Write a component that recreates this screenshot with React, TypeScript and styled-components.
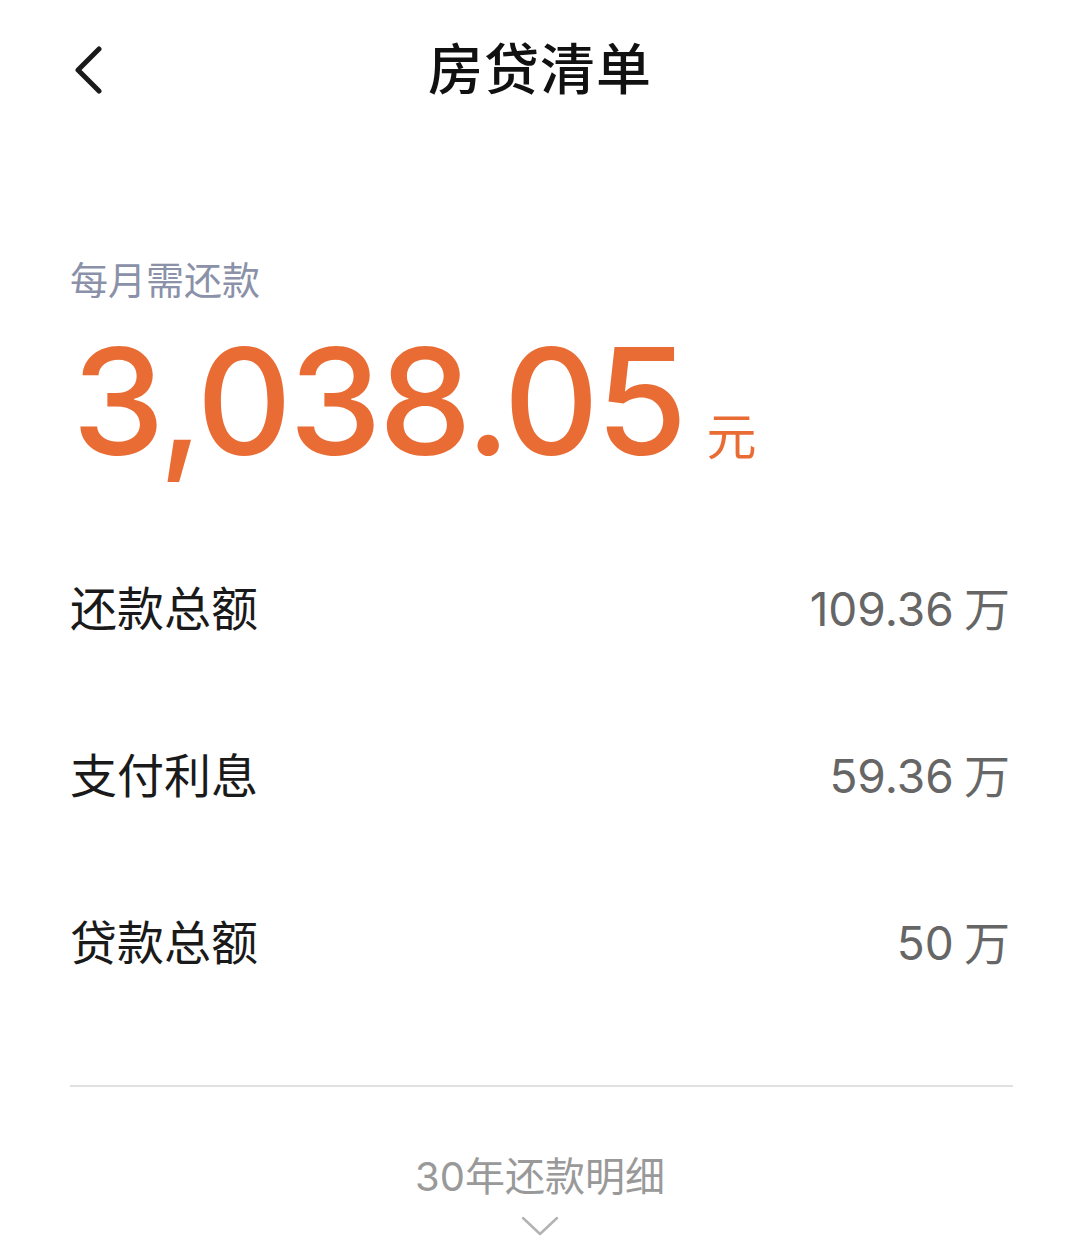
import React from "react";
import styled, { createGlobalStyle } from "styled-components";

const GlobalStyle = createGlobalStyle`
  html, body {
    margin: 0;
    padding: 0;
    background: #ffffff;
  }
  body {
    font-family: "Noto Sans CJK SC", "Noto Sans", sans-serif;
  }
`;

interface RowItem {
  label: string;
  value: string;
}

const rows: RowItem[] = [
  { label: "还款总额", value: "109.36" },
  { label: "支付利息", value: "59.36" },
  { label: "贷款总额", value: "50" },
];

const App = () => {
  return (
    <Page>
      <GlobalStyle />
      <Header>
        <BackButton aria-label="back">
          <svg width="32" height="48" viewBox="0 0 32 48" fill="none">
            <path
              d="M27 3 L6 24 L27 45"
              stroke="#1a1a1a"
              strokeWidth="5"
              strokeLinecap="round"
              strokeLinejoin="round"
            />
          </svg>
        </BackButton>
        <Title>房贷清单</Title>
        <span />
      </Header>

      <Summary>
        <SummaryLabel>每月需还款</SummaryLabel>
        <AmountLine>
          <Amount>3,038.05</Amount>
          <Unit>元</Unit>
        </AmountLine>
      </Summary>

      <List>
        {rows.map((row) => (
          <Row key={row.label}>
            <RowLabel>{row.label}</RowLabel>
            <RowValue>
              <Num>{row.value}</Num> 万
            </RowValue>
          </Row>
        ))}
      </List>

      <Divider />

      <Detail>
        <DetailText>
          <Num>30</Num>年还款明细
        </DetailText>
        <svg width="40" height="22" viewBox="0 0 40 22" fill="none">
          <path
            d="M3 3 L20 19 L37 3"
            stroke="#b3b3b3"
            strokeWidth="2.5"
            strokeLinecap="round"
            strokeLinejoin="round"
          />
        </svg>
      </Detail>
    </Page>
  );
};

const Page = styled.div`
  width: 1073px;
  height: 1253px;
  overflow: hidden;
  box-sizing: border-box;
  padding: 0 63px 0 70px;
`;

const Header = styled.div`
  height: 140px;
  display: grid;
  grid-template-columns: 1fr auto 1fr;
  align-items: center;
`;

const BackButton = styled.button`
  justify-self: start;
  border: none;
  background: none;
  padding: 0;
  margin-left: 2px;
  display: flex;
  cursor: pointer;
`;

const Title = styled.h1`
  margin: 0 0 10px;
  font-size: 55px;
  font-weight: 500;
  color: #111111;
  letter-spacing: 1px;
`;

const Summary = styled.div`
  margin-top: 112px;
  display: flex;
  flex-direction: column;
`;

const SummaryLabel = styled.div`
  font-size: 38px;
  line-height: 52px;
  color: #8a91a8;
`;

const Num = styled.span`
  font-family: "Inter", "Noto Sans", sans-serif;
`;

const AmountLine = styled.div`
  display: flex;
  align-items: baseline;
  margin-top: 33px;
  margin-left: 2px;
`;

const Amount = styled.span`
  font-family: "Inter", "Noto Sans", sans-serif;
  font-size: 148px;
  line-height: 130px;
  font-weight: 500;
  color: #ea6c35;
  letter-spacing: -3px;
`;

const Unit = styled.span`
  font-size: 50px;
  color: #ea6c35;
  margin-left: 22px;
`;

const List = styled.div`
  margin-top: 53px;
  display: flex;
  flex-direction: column;
`;

const Row = styled.div`
  height: 167px;
  display: flex;
  align-items: center;
  justify-content: space-between;
`;

const RowLabel = styled.span`
  font-size: 47px;
  color: #1a1a1a;
`;

const RowValue = styled.span`
  font-size: 46px;
  color: #666666;
`;

const Divider = styled.div`
  margin-top: 62px;
  height: 2px;
  background: #e0e0e0;
  margin-right: -3px;
`;

const Detail = styled.div`
  margin-top: 58px;
  display: flex;
  flex-direction: column;
  align-items: center;
  gap: 12px;
`;

const DetailText = styled.span`
  font-size: 40px;
  color: #999999;
`;

export default App;
